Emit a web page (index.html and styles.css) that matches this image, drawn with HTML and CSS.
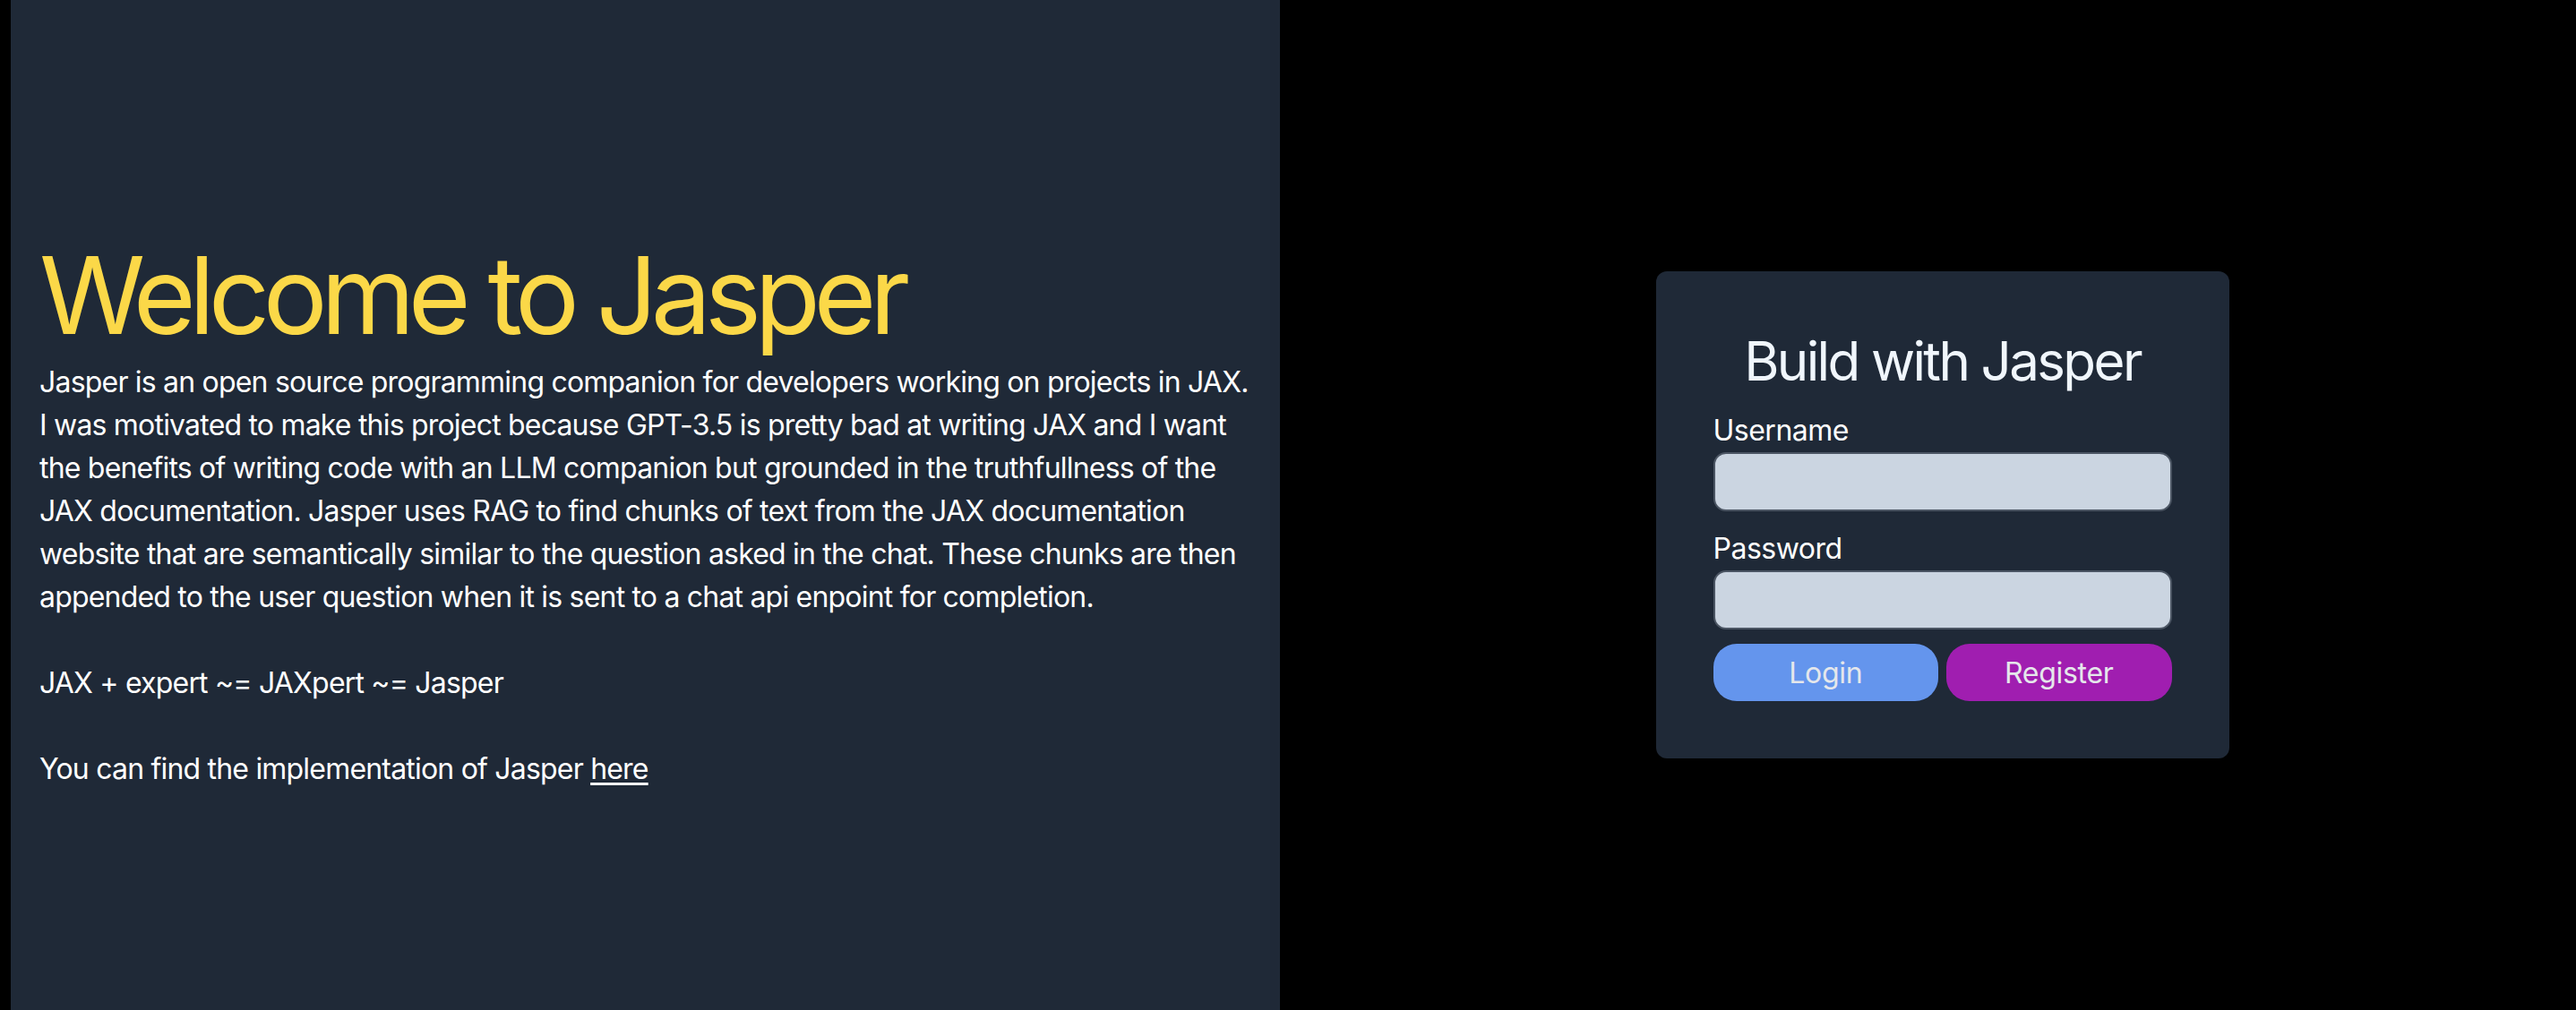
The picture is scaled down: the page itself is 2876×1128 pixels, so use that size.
FILE: index.html
```html
<!DOCTYPE html>
<html lang="en">
<head>
<meta charset="utf-8">
<title>Jasper</title>
<link rel="stylesheet" href="styles.css">
</head>
<body>
<div class="page">
  <section class="intro">
    <div class="intro-inner">
      <h1 class="title">Welcome to Jasper</h1>
      <p class="about">Jasper is an open source programming companion for developers working on projects in JAX.<br>I was motivated to make this project because GPT-3.5 is pretty bad at writing JAX and I want<br>the benefits of writing code with an LLM companion but grounded in the truthfullness of the<br>JAX documentation. Jasper uses RAG to find chunks of text from the JAX documentation<br>website that are semantically similar to the question asked in the chat. These chunks are then<br>appended to the user question when it is sent to a chat api enpoint for completion.<br><br>JAX + expert ~= JAXpert ~= Jasper<br><br>You can find the implementation of Jasper <a class="link" href="#">here</a></p>
    </div>
  </section>
  <section class="auth">
    <form class="card">
      <h2 class="card-title">Build with Jasper</h2>
      <label class="field-label" for="username">Username</label>
      <input class="field-input" id="username" type="text">
      <label class="field-label second" for="password">Password</label>
      <input class="field-input" id="password" type="password">
      <div class="actions">
        <button type="button" class="btn btn-login">Login</button>
        <button type="button" class="btn btn-register">Register</button>
      </div>
    </form>
  </section>
</div>
</body>
</html>
```

FILE: styles.css
```css
html, body {
  margin: 0;
  padding: 0;
  background: #000;
  font-family: Inter, "Liberation Sans", sans-serif;
}

.page {
  display: flex;
  height: 1128px;
}

.intro {
  width: 1417px;
  margin-left: 12px;
  box-sizing: border-box;
  padding: 24px 32px 0 32px;
  background: #1f2937;
  display: flex;
  flex-direction: column;
  justify-content: center;
}

.title {
  margin: 0;
  font-size: 120px;
  line-height: 120px;
  font-weight: 400;
  color: #fbd848;
  letter-spacing: -7.5px;
}

.about {
  margin: 13px 0 0 0;
  font-size: 32px;
  line-height: 48px;
  color: #ffffff;
  white-space: nowrap;
  letter-spacing: -0.8px;
}

.link {
  color: #ffffff;
  text-decoration: underline;
  text-underline-offset: 4px;
}

.auth {
  flex: 1;
  display: flex;
  align-items: center;
  justify-content: center;
  padding: 22px 0 0 32px;
}

.card {
  width: 640px;
  box-sizing: border-box;
  padding: 64px;
  background: #1f2937;
  border-radius: 12px;
  display: flex;
  flex-direction: column;
  margin: 0;
}

.card-title {
  margin: 0 0 18px 0;
  font-size: 60px;
  line-height: 72px;
  font-weight: 400;
  text-align: center;
  color: #f0f6fc;
  letter-spacing: -2.6px;
}

.field-label {
  font-size: 32px;
  line-height: 48px;
  color: #ffffff;
  letter-spacing: -0.5px;
}

.field-label.second {
  margin-top: 18px;
}

.field-input {
  display: block;
  width: 100%;
  height: 66px;
  box-sizing: border-box;
  margin: 0;
  border: 2px solid #4b5563;
  border-radius: 14px;
  background: #cbd5e1;
  font-size: 32px;
  font-family: inherit;
}

.actions {
  display: flex;
  gap: 9px;
  margin-top: 16px;
}

.btn {
  flex: 1;
  height: 64px;
  border: none;
  border-radius: 26px;
  font-family: inherit;
  font-size: 32px;
  color: #e5e7eb;
  letter-spacing: -0.3px;
  cursor: pointer;
}

.btn-login {
  background: #6495ed;
}

.btn-register {
  background: #a01eb0;
}
```
